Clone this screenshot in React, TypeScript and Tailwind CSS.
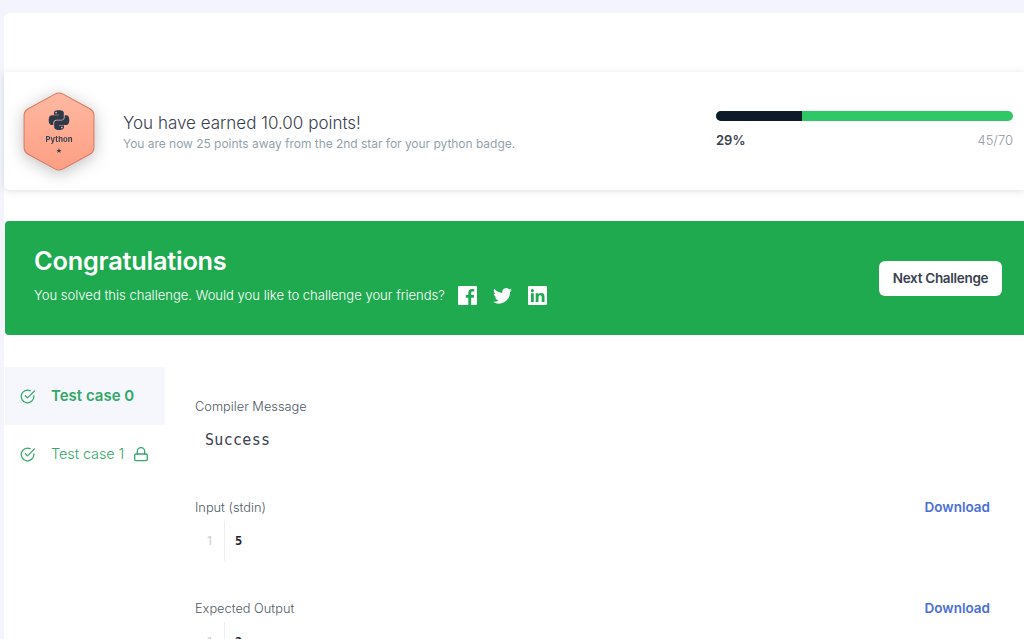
import React from "react";
import { FaPython } from "react-icons/fa";

const Check = () => (
  <svg width="17" height="17" viewBox="0 0 24 24" fill="none" stroke="#34a868" strokeWidth="1.800" strokeLinecap="round" strokeLinejoin="round" className="shrink-0">
    <path d="M21 11.100V12a9 9 0 1 1-5.300-8.200" />
    <path d="M22 4 12 14l-3-3" />
  </svg>
);

const Lock = () => (
  <svg width="16" height="16" viewBox="0 0 24 24" fill="none" stroke="#34a868" strokeWidth="2" strokeLinecap="round" strokeLinejoin="round" className="shrink-0">
    <rect x="2.500" y="12" width="19" height="10" rx="2" />
    <path d="M6.500 12V8a5.500 5.500 0 0 1 11 0v4" />
  </svg>
);

const Badge = () => (
  <svg width="76" height="79" viewBox="0 0 74 80" preserveAspectRatio="none" className="shrink-0 drop-shadow-[0_3px_8px_rgba(0,0,0,0.25)]">
    <defs>
      <linearGradient id="hex" x1="0" y1="0" x2="0" y2="1">
        <stop offset="0" stopColor="#ffb8a1" />
        <stop offset="1" stopColor="#fd9f84" />
      </linearGradient>
    </defs>
    <path
      d="M33 2.200a8 8 0 0 1 8 0l26 14.800a8 8 0 0 1 4 7v32a8 8 0 0 1-4 7L41 77.800a8 8 0 0 1-8 0L7 63a8 8 0 0 1-4-7V24a8 8 0 0 1 4-7z"
      fill="url(#hex)"
      stroke="#d9775e"
      strokeWidth="1"
    />
    <FaPython x="25.500" y="17" size={23} color="#2d3a4c" />
    <text x="37" y="51" textAnchor="middle" fontSize="7.500" fontWeight="700" fill="#39424e" fontFamily="Inter, sans-serif">Python</text>
    <text x="37" y="62" textAnchor="middle" fontSize="7" fill="#2d3a4c" fontFamily="DejaVu Sans, sans-serif">★</text>
  </svg>
);

const Facebook = () => (
  <svg width="19" height="19" viewBox="0 0 19 19">
    <path fill="#fff" d="M1 0h17a1 1 0 0 1 1 1v17a1 1 0 0 1-1 1h-4.800v-7.200h2.500l.4-2.900h-2.900V7c0-.8.300-1.400 1.500-1.400h1.500V3c-.3 0-1.200-.1-2.200-.1-2.200 0-3.700 1.300-3.700 3.800v2.200H7.800v2.900h2.500V19H1a1 1 0 0 1-1-1V1a1 1 0 0 1 1-1z" />
  </svg>
);

const Twitter = () => (
  <svg width="19" height="16" viewBox="0 0 24 20">
    <path fill="#fff" d="M24 2.400c-.9.400-1.800.7-2.800.8 1-.6 1.800-1.600 2.200-2.700-.9.600-2 1-3.100 1.200A4.900 4.900 0 0 0 11.900 6.200C7.800 6 4.200 4 1.700.9c-1.300 2.200-.7 5.100 1.500 6.600-.8 0-1.600-.2-2.200-.6 0 2.300 1.600 4.400 3.900 4.900-.7.200-1.500.2-2.200.1.600 2 2.500 3.400 4.600 3.400A9.900 9.900 0 0 1 0 17.300 14 14 0 0 0 21.500 4.900c1-.7 1.800-1.500 2.500-2.500z" />
  </svg>
);

const Linkedin = () => (
  <svg width="19" height="19" viewBox="0 0 19 19">
    <path
      fill="#fff"
      fillRule="evenodd"
      d="M1 0h17a1 1 0 0 1 1 1v17a1 1 0 0 1-1 1H1a1 1 0 0 1-1-1V1a1 1 0 0 1 1-1zm2 7.300V16h2.800V7.300zM4.400 3a1.600 1.600 0 1 0 0 3.200 1.600 1.600 0 0 0 0-3.200zm3.300 4.300V16h2.800v-4.400c0-1.200.3-2.300 1.700-2.300s1.500 1.300 1.500 2.400V16h2.800v-4.900c0-2.400-.6-4-3.300-4-1.300 0-2.200.7-2.600 1.400V7.300z"
    />
  </svg>
);

function CodeLine({ n, value }: { n: string; value: string }) {
  return (
    <div className="flex h-10 items-center text-[12px]">
      <span className="w-[29px] pr-[12px] text-right text-[#c8ccd0]">{n}</span>
      <span className="flex h-full items-center border-l border-[#eceef1] pl-[10px] font-['DejaVu_Sans_Mono',monospace] font-bold text-[#1f2430]">{value}</span>
    </div>
  );
}

export default function App() {
  return (
    <div className="h-[639px] w-[1024px] overflow-hidden bg-[#f4f5fc] pl-1 pt-[13px] font-['Inter',sans-serif]">
      <div className="h-[640px] rounded-tl-md bg-white">
        <div className="h-[59px]" />

        <section className="flex h-[118px] items-center rounded-bl-md bg-white pl-[17px] pr-[11px] shadow-[0_1px_7px_rgba(30,40,60,0.14)]">
          <Badge />
          <div className="ml-[26px] mt-[1px] flex-1">
            <h2 className="text-[17px] font-light leading-6 text-[#39424e]">You have earned 10.00 points!</h2>
            <p className="mt-[1px] text-[12px] leading-4 tracking-[-0.03px] text-[#94a3ab]">You are now 25 points away from the 2nd star for your python badge.</p>
          </div>
          <div className="-mt-[2px] w-[297px]">
            <div className="flex h-[10px] overflow-hidden rounded-full bg-[#2ec866]">
              <div className="h-full w-[29%] bg-[#0e1a2a]" />
            </div>
            <div className="mt-[9px] flex justify-between text-[13px] leading-5">
              <span className="font-semibold text-[#39424e]">29%</span>
              <span className="font-light text-[#8f989f]">45/70</span>
            </div>
          </div>
        </section>

        <section className="mt-[31px] ml-px flex h-[114px] items-center justify-between rounded-l-[4px] bg-[#1faa50] pl-[29px] pr-[22px]">
          <div className="-mt-[6px]">
            <h1 className="text-[25.300px] font-semibold leading-8 tracking-[-0.2px] text-white">Congratulations</h1>
            <div className="mt-[9px] flex items-center">
              <span className="text-[13.050px] font-light text-white">You solved this challenge. Would you like to challenge your friends?</span>
              <div className="ml-[13px] flex items-center gap-[16px]">
                <Facebook />
                <Twitter />
                <Linkedin />
              </div>
            </div>
          </div>
          <button className="h-[35px] w-[123px] rounded-[6px] bg-white text-[13.500px] font-semibold tracking-[-0.3px] text-[#39424e]">
            Next Challenge
          </button>
        </section>

        <div className="mt-[32px] flex">
          <aside className="ml-px w-[160px] shrink-0">
            <div className="flex h-[58px] items-center bg-[#f6f7fc] pl-[14px]">
              <Check />
              <span className="ml-[15px] text-[15px] font-semibold text-[#34a868]">Test case 0</span>
            </div>
            <div className="flex h-[58px] items-center pl-[14px]">
              <Check />
              <span className="ml-[15px] text-[14.500px] font-light tracking-[-0.1px] text-[#34a868]">Test case 1</span>
              <span className="ml-[9px]"><Lock /></span>
            </div>
          </aside>

          <main className="flex-1 pl-[30px] pr-[34px] pt-[30px]">
            <div className="text-[12.800px] font-light leading-5 text-[#4f5b66]">Compiler Message</div>
            <div className="mt-[13px] pl-[10px] font-['DejaVu_Sans_Mono',monospace] text-[15px] leading-5 tracking-[0.3px] text-[#39424e]">Success</div>

            <div className="mt-[48px] flex items-center justify-between leading-5">
              <span className="text-[12.800px] font-light text-[#4f5b66]">Input (stdin)</span>
              <span className="-mt-[2px] text-[13.500px] font-semibold text-[#4a6fd8]">Download</span>
            </div>
            <div className="mt-[3px]"><CodeLine n="1" value="5" /></div>

            <div className="mt-[38px] flex items-center justify-between leading-5">
              <span className="text-[12.800px] font-light text-[#4f5b66]">Expected Output</span>
              <span className="-mt-[2px] text-[13.500px] font-semibold text-[#4a6fd8]">Download</span>
            </div>
            <div className="mt-[3px]"><CodeLine n="1" value="2" /></div>
          </main>
        </div>
      </div>
    </div>
  );
}
